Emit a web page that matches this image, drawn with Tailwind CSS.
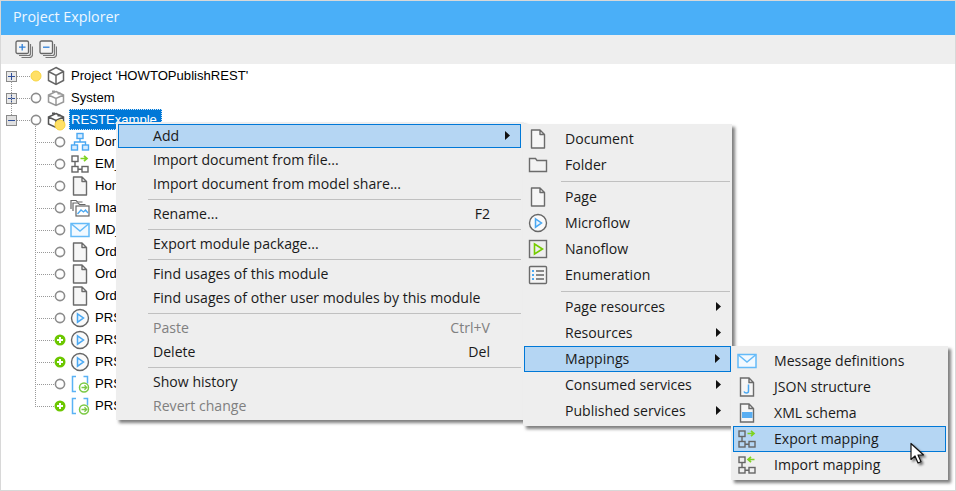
<!DOCTYPE html>
<html lang="en">
<head>
    <meta charset="UTF-8">
    <title>Project Explorer</title>
    <script src="https://cdn.jsdelivr.net/npm/@tailwindcss/browser@4"></script>
</head>
<body class="w-[956px] h-[491px] overflow-hidden bg-white">
    <svg class="hidden">
        <symbol id="plus" viewBox="0 0 11 11"><rect x=".5" y=".5" width="10" height="10" fill="#e8e8e8" stroke="#8a8a8a"/><path d="M2 5.5h7M5.5 2v7" stroke="#2f4f9a"/></symbol>
        <symbol id="minus" viewBox="0 0 11 11"><rect x=".5" y=".5" width="10" height="10" fill="#e0e0e0" stroke="#8a8a8a"/><path d="M2 5.5h7" stroke="#2f4f9a"/></symbol>
        <symbol id="off" viewBox="0 0 12 12"><circle cx="6" cy="6" r="4.6" fill="#fff" stroke="#8c8c8c" stroke-width="1.6"/></symbol>
        <symbol id="on" viewBox="0 0 12 12"><circle cx="6" cy="6" r="5" fill="#ffe066" stroke="#f8d540"/></symbol>
        <symbol id="add" viewBox="0 0 12 12"><circle cx="6" cy="6" r="5.5" fill="#6cc700"/><path d="M3 6h6M6 3v6" stroke="#fff" stroke-width="2"/></symbol>
        <symbol id="cube" viewBox="0 0 20 20"><path d="M10 1.5l7.5 4v9l-7.5 4-7.5-4v-9zM2.5 5.5l7.5 4 7.5-4M10 9.500v9" fill="none" stroke="#666" stroke-width="1.500"/></symbol>
        <symbol id="module" viewBox="0 0 20 20"><path d="M10 3.500l7.500 3.500v7l-7.500 3.500-7.500-3.500v-7zM2.500 7l7.500 3.500 7.500-3.500M10 10.500v7" fill="none" stroke="currentColor" stroke-width="1.500"/><rect x="6" y="2.500" width="3" height="2" fill="currentColor"/><rect x="11.500" y="4.500" width="3" height="2" fill="currentColor"/></symbol>
        <symbol id="domain" viewBox="0 0 20 20"><g fill="#d6ecff" stroke="#4aa8f2" stroke-width="1.400"><rect x="7" y="1.500" width="6" height="5"/><rect x="1.500" y="13" width="6" height="5"/><rect x="12.500" y="13" width="6" height="5"/></g><path d="M10 6.500v3.500M4.500 13v-3h11v3" fill="none" stroke="#4aa8f2" stroke-width="1.400"/></symbol>
        <symbol id="export" viewBox="0 0 20 20"><g fill="none" stroke="#666" stroke-width="1.400"><rect x="2" y="2" width="6" height="5.500"/><rect x="2" y="12.500" width="6" height="5.500"/><rect x="12" y="12.500" width="6" height="5.500"/><path d="M5 7.500v5M8 15.200h4"/></g><path d="M10.500 4.500h6M14 1.800l3 2.700-3 2.700" fill="none" stroke="#7ed321" stroke-width="1.700"/></symbol>
        <symbol id="import" viewBox="0 0 20 20"><g fill="none" stroke="#666" stroke-width="1.400"><rect x="2" y="2" width="6" height="5.500"/><rect x="2" y="12.500" width="6" height="5.500"/><rect x="12" y="12.500" width="6" height="5.500"/><path d="M5 7.500v5M8 15.200h4"/></g><path d="M17.500 4.500h-6.500M14 1.800l-3 2.700 3 2.700" fill="none" stroke="#7ed321" stroke-width="1.700"/></symbol>
        <symbol id="doc" viewBox="0 0 20 20"><path d="M3.500 1h8.500l4.500 4.500v13.500h-13zM12 1v4.500h4.500" fill="#f6f6f6" stroke="#6b6b6b" stroke-width="1.400" stroke-linejoin="round"/></symbol>
        <symbol id="images" viewBox="0 0 20 20"><path d="M1 11V2.500h5l1.500 1.500h5" fill="none" stroke="#666" stroke-width="1.200"/><path d="M3 13V5h5l1.500 1.500h6" fill="none" stroke="#666" stroke-width="1.200"/><rect x="6" y="8" width="13" height="10" fill="#fff" stroke="#666" stroke-width="1.200"/><path d="M7.500 16l3.500-4 2.500 2 2-2 2.500 3" fill="none" stroke="#4aa8f2" stroke-width="1.300"/></symbol>
        <symbol id="mail" viewBox="0 0 20 20"><rect x="1" y="3.500" width="18" height="13" fill="#f2f9ff" stroke="#64baf8" stroke-width="1.500"/><path d="M1.500 4l8.500 7 8.500-7" fill="none" stroke="#64baf8" stroke-width="1.500"/></symbol>
        <symbol id="flow" viewBox="0 0 20 20"><circle cx="10" cy="10" r="8.500" fill="#fafafa" stroke="#666" stroke-width="1.400"/><path d="M7.500 5.800l6 4.200-6 4.200z" fill="#e8f4ff" stroke="#4aa8f2" stroke-width="1.500"/></symbol>
        <symbol id="rest" viewBox="0 0 20 20"><path d="M6 2.500H2.500v15H6M13.500 2.500h4v7" fill="none" stroke="#5ab2f5" stroke-width="1.500"/><circle cx="14" cy="13.500" r="4.500" fill="#fff" stroke="#7ac943" stroke-width="1.500"/><path d="M11.500 13.500h5M14.500 11.300l2.200 2.200-2.200 2.200" fill="none" stroke="#7ac943" stroke-width="1.300"/></symbol>
        <symbol id="folder" viewBox="0 0 20 20"><path d="M1.500 16.500v-13h6l1.500 2h9.500v11z" fill="#f2f2f2" stroke="#6b6b6b" stroke-width="1.400"/></symbol>
        <symbol id="nano" viewBox="0 0 20 20"><rect x="1.500" y="1.500" width="17" height="17" fill="#eee" stroke="#6b6b6b" stroke-width="1.400"/><path d="M6.500 5l8 5-8 5z" fill="none" stroke="#76cc00" stroke-width="1.600"/></symbol>
        <symbol id="enum" viewBox="0 0 20 20"><rect x="1.500" y="1.500" width="17" height="17" rx="1" fill="#f4f4f4" stroke="#6b6b6b" stroke-width="1.400"/><path d="M8 6h8M8 10h8M8 14h8" stroke="#666" stroke-width="1.300"/><path d="M4 6h2M4 10h2M4 14h2" stroke="#4aa8f2" stroke-width="2"/></symbol>
        <symbol id="json" viewBox="0 0 20 20"><path d="M3.500 1h8.500l4.500 4.500v13.500h-13zM12 1v4.500h4.500" fill="#f6f6f6" stroke="#6b6b6b" stroke-width="1.400"/><path d="M11.500 7.500v6.500q0 2-2 2t-2.500-1.500" fill="none" stroke="#4aa8f2" stroke-width="1.500"/></symbol>
        <symbol id="xml" viewBox="0 0 20 20"><path d="M3.500 1h8.500l4.500 4.500v13.500h-13zM12 1v4.500h4.500" fill="#f6f6f6" stroke="#6b6b6b" stroke-width="1.400"/><rect x="5" y="9" width="10.500" height="6" fill="#59aef2"/></symbol>
        <symbol id="arrow" viewBox="0 0 5 9"><path d="M0 0l5 4.500-5 4.500z" fill="#111"/></symbol>
    </svg>

    <div class="relative w-[956px] h-[491px] border border-[#d8d8d8] font-['Open_Sans',sans-serif] text-[#1a1a1a]">
        <!-- title bar -->
        <div class="h-[34px] bg-[#4aaff8] flex items-center pl-3 pb-[2px] text-[14.300px] text-[#eef7ff]">Project Explorer</div>

        <!-- toolbar -->
        <div class="h-[29px] bg-[#eeeeee] flex items-center gap-[6px] pl-[14px] pb-[2px]">
            <svg class="w-[18px] h-[18px]" viewBox="0 0 18 18"><path d="M4 15.500h9.500q2 0 2-2V4M6.500 17.500h8q3 0 3-3V6.500" fill="none" stroke="#777" stroke-width="1.200"/><rect x="1" y="1" width="12.500" height="12.500" rx="1.500" fill="#f4f4f4" stroke="#666" stroke-width="1.300"/><path d="M4 7.200h6.500M7.200 4v6.500" stroke="#2f7fd6" stroke-width="1.300"/></svg>
            <svg class="w-[18px] h-[18px]" viewBox="0 0 18 18"><path d="M4 15.500h9.500q2 0 2-2V4M6.500 17.500h8q3 0 3-3V6.500" fill="none" stroke="#777" stroke-width="1.200"/><rect x="1" y="1" width="12.500" height="12.500" rx="1.500" fill="#f4f4f4" stroke="#666" stroke-width="1.300"/><path d="M4 7.200h6.500" stroke="#2f7fd6" stroke-width="1.300"/></svg>
        </div>

        <!-- tree -->
        <div class="relative pt-px font-['Liberation_Sans',sans-serif] text-[13.100px] text-black">
            <div class="absolute left-[10px] top-[17px] h-[44px] border-l border-dotted border-[#999]"></div>
            <div class="absolute left-[34px] top-[54px] h-[287px] border-l border-dotted border-[#999]"></div>

            <div class="flex items-center h-[22px] pl-[5px]"><svg class="w-[11px] h-[11px]"><use href="#plus"/></svg><span class="w-[13px] border-t border-dotted border-[#999]"></span><svg class="w-3 h-3"><use href="#on"/></svg><svg class="w-5 h-5 ml-[4px]"><use href="#cube"/></svg><span class="ml-[5px]">Project 'HOWTOPublishREST'</span></div>
            <div class="flex items-center h-[22px] pl-[5px]"><svg class="w-[11px] h-[11px]"><use href="#plus"/></svg><span class="w-[13px] border-t border-dotted border-[#999]"></span><svg class="w-3 h-3"><use href="#off"/></svg><svg class="w-5 h-5 ml-[4px] text-[#999]"><use href="#module"/></svg><span class="ml-[5px]">System</span></div>
            <div class="relative flex items-center h-[22px] pl-[5px]"><svg class="w-[11px] h-[11px]"><use href="#minus"/></svg><span class="w-[13px] border-t border-dotted border-[#999]"></span><svg class="w-3 h-3"><use href="#off"/></svg><svg class="w-5 h-5 ml-[4px] text-[#555]"><use href="#module"/></svg><svg class="absolute left-[53px] top-[10px] w-3 h-3"><use href="#on"/></svg><span class="ml-[3px] px-px h-[21px] leading-[19px] w-[93px] bg-[#0078d7] text-white border border-dotted border-[#cfe6fa] -mt-px">RESTExample</span></div>

            <div class="flex items-center h-[22px] pl-[34px]"><span class="w-[19px] border-t border-dotted border-[#999]"></span><svg class="w-3 h-3"><use href="#off"/></svg><svg class="w-5 h-5 ml-[4px]"><use href="#domain"/></svg><span class="ml-[5px]">Dom</span></div>
            <div class="flex items-center h-[22px] pl-[34px]"><span class="w-[19px] border-t border-dotted border-[#999]"></span><svg class="w-3 h-3"><use href="#off"/></svg><svg class="w-5 h-5 ml-[4px]"><use href="#export"/></svg><span class="ml-[5px]">EM_</span></div>
            <div class="flex items-center h-[22px] pl-[34px]"><span class="w-[19px] border-t border-dotted border-[#999]"></span><svg class="w-3 h-3"><use href="#off"/></svg><svg class="w-5 h-5 ml-[4px]"><use href="#doc"/></svg><span class="ml-[5px]">Hom</span></div>
            <div class="flex items-center h-[22px] pl-[34px]"><span class="w-[19px] border-t border-dotted border-[#999]"></span><svg class="w-3 h-3"><use href="#off"/></svg><svg class="w-5 h-5 ml-[4px]"><use href="#images"/></svg><span class="ml-[5px]">Ima</span></div>
            <div class="flex items-center h-[22px] pl-[34px]"><span class="w-[19px] border-t border-dotted border-[#999]"></span><svg class="w-3 h-3"><use href="#off"/></svg><svg class="w-5 h-5 ml-[4px]"><use href="#mail"/></svg><span class="ml-[5px]">MD_</span></div>
            <div class="flex items-center h-[22px] pl-[34px]"><span class="w-[19px] border-t border-dotted border-[#999]"></span><svg class="w-3 h-3"><use href="#off"/></svg><svg class="w-5 h-5 ml-[4px]"><use href="#doc"/></svg><span class="ml-[5px]">Ord</span></div>
            <div class="flex items-center h-[22px] pl-[34px]"><span class="w-[19px] border-t border-dotted border-[#999]"></span><svg class="w-3 h-3"><use href="#off"/></svg><svg class="w-5 h-5 ml-[4px]"><use href="#doc"/></svg><span class="ml-[5px]">Ord</span></div>
            <div class="flex items-center h-[22px] pl-[34px]"><span class="w-[19px] border-t border-dotted border-[#999]"></span><svg class="w-3 h-3"><use href="#off"/></svg><svg class="w-5 h-5 ml-[4px]"><use href="#doc"/></svg><span class="ml-[5px]">Ord</span></div>
            <div class="flex items-center h-[22px] pl-[34px]"><span class="w-[19px] border-t border-dotted border-[#999]"></span><svg class="w-3 h-3"><use href="#off"/></svg><svg class="w-5 h-5 ml-[4px]"><use href="#flow"/></svg><span class="ml-[5px]">PRS</span></div>
            <div class="flex items-center h-[22px] pl-[34px]"><span class="w-[19px] border-t border-dotted border-[#999]"></span><svg class="w-3 h-3"><use href="#add"/></svg><svg class="w-5 h-5 ml-[4px]"><use href="#flow"/></svg><span class="ml-[5px]">PRS</span></div>
            <div class="flex items-center h-[22px] pl-[34px]"><span class="w-[19px] border-t border-dotted border-[#999]"></span><svg class="w-3 h-3"><use href="#add"/></svg><svg class="w-5 h-5 ml-[4px]"><use href="#flow"/></svg><span class="ml-[5px]">PRS</span></div>
            <div class="flex items-center h-[22px] pl-[34px]"><span class="w-[19px] border-t border-dotted border-[#999]"></span><svg class="w-3 h-3"><use href="#off"/></svg><svg class="w-5 h-5 ml-[4px]"><use href="#rest"/></svg><span class="ml-[5px]">PRS</span></div>
            <div class="flex items-center h-[22px] pl-[34px]"><span class="w-[19px] border-t border-dotted border-[#999]"></span><svg class="w-3 h-3"><use href="#add"/></svg><svg class="w-5 h-5 ml-[4px]"><use href="#rest"/></svg><span class="ml-[5px]">PRS</span></div>
        </div>

        <!-- context menu -->
        <div class="absolute left-[115px] top-[121px] w-[408px] p-[2px] pr-0 bg-[#eeeeee] shadow-[3px_3px_3px_rgba(0,0,0,0.5)] text-[14.080px]">
            <div class="flex items-center justify-between h-[24px] w-[403px] pl-[34px] pr-[10px] pb-px bg-[#b5d6f3] border border-[#0078d7]"><span>Add</span><svg class="w-[5px] h-[9px]"><use href="#arrow"/></svg></div>
            <div class="flex items-center h-[24px] pl-[35px] pb-px">Import document from file...</div>
            <div class="flex items-center h-[24px] pl-[35px] pb-px">Import document from model share...</div>
            <div class="h-px bg-[#c0c0c0] my-[2.500px] ml-[30px] mr-[3px]"></div>
            <div class="flex items-center justify-between h-[24px] pl-[35px] pr-[34px] pb-px"><span>Rename...</span><span>F2</span></div>
            <div class="h-px bg-[#c0c0c0] my-[2.500px] ml-[30px] mr-[3px]"></div>
            <div class="flex items-center h-[24px] pl-[35px] pb-px">Export module package...</div>
            <div class="h-px bg-[#c0c0c0] my-[2.500px] ml-[30px] mr-[3px]"></div>
            <div class="flex items-center h-[24px] pl-[35px] pb-px">Find usages of this module</div>
            <div class="flex items-center h-[24px] pl-[35px] pb-px">Find usages of other user modules by this module</div>
            <div class="h-px bg-[#c0c0c0] my-[2.500px] ml-[30px] mr-[3px]"></div>
            <div class="flex items-center justify-between h-[24px] pl-[35px] pr-[34px] pb-px text-[#808080]"><span>Paste</span><span>Ctrl+V</span></div>
            <div class="flex items-center justify-between h-[24px] pl-[35px] pr-[34px] pb-px"><span>Delete</span><span>Del</span></div>
            <div class="h-px bg-[#c0c0c0] my-[2.500px] ml-[30px] mr-[3px]"></div>
            <div class="flex items-center h-[24px] pl-[35px] pb-px">Show history</div>
            <div class="flex items-center h-[24px] pl-[35px] pb-px text-[#808080]">Revert change</div>
        </div>

        <!-- add submenu -->
        <div class="absolute left-[522px] top-[123px] w-[209px] py-[2px] pl-px bg-[#eeeeee] shadow-[3px_3px_3px_rgba(0,0,0,0.5)] text-[14.080px]">
            <div class="flex items-center h-[26px] pb-px"><svg class="w-5 h-5 ml-[4px]"><use href="#doc"/></svg><span class="ml-[17px]">Document</span></div>
            <div class="flex items-center h-[26px] pb-px"><svg class="w-5 h-5 ml-[4px]"><use href="#folder"/></svg><span class="ml-[17px]">Folder</span></div>
            <div class="h-px bg-[#c0c0c0] my-[2.500px] ml-[37px] mr-[2px]"></div>
            <div class="flex items-center h-[26px] pb-px"><svg class="w-5 h-5 ml-[4px]"><use href="#doc"/></svg><span class="ml-[17px]">Page</span></div>
            <div class="flex items-center h-[26px] pb-px"><svg class="w-5 h-5 ml-[4px]"><use href="#flow"/></svg><span class="ml-[17px]">Microflow</span></div>
            <div class="flex items-center h-[26px] pb-px"><svg class="w-5 h-5 ml-[4px]"><use href="#nano"/></svg><span class="ml-[17px]">Nanoflow</span></div>
            <div class="flex items-center h-[26px] pb-px"><svg class="w-5 h-5 ml-[4px]"><use href="#enum"/></svg><span class="ml-[17px]">Enumeration</span></div>
            <div class="h-px bg-[#c0c0c0] my-[2.500px] ml-[37px] mr-[2px]"></div>
            <div class="flex items-center justify-between h-[26px] pl-[41px] pr-[11px] pb-px"><span>Page resources</span><svg class="w-[5px] h-[9px]"><use href="#arrow"/></svg></div>
            <div class="flex items-center justify-between h-[26px] pl-[41px] pr-[11px] pb-px"><span>Resources</span><svg class="w-[5px] h-[9px]"><use href="#arrow"/></svg></div>
            <div class="flex items-center justify-between h-[26px] w-[207px] pl-[40px] pr-[10px] pb-px bg-[#b5d6f3] border border-[#0078d7]"><span>Mappings</span><svg class="w-[5px] h-[9px]"><use href="#arrow"/></svg></div>
            <div class="flex items-center justify-between h-[26px] pl-[41px] pr-[11px] pb-px"><span>Consumed services</span><svg class="w-[5px] h-[9px]"><use href="#arrow"/></svg></div>
            <div class="flex items-center justify-between h-[26px] pl-[41px] pr-[11px] pb-px"><span>Published services</span><svg class="w-[5px] h-[9px]"><use href="#arrow"/></svg></div>
        </div>

        <!-- mappings submenu -->
        <div class="absolute left-[730px] top-[345px] w-[217px] p-[2px] bg-[#eeeeee] shadow-[3px_3px_3px_rgba(0,0,0,0.5)] text-[14.080px]">
            <div class="flex items-center h-[26px] pb-px"><svg class="w-5 h-5 ml-[4px]"><use href="#mail"/></svg><span class="ml-[17px]">Message definitions</span></div>
            <div class="flex items-center h-[26px] pb-px"><svg class="w-5 h-5 ml-[4px]"><use href="#json"/></svg><span class="ml-[17px]">JSON structure</span></div>
            <div class="flex items-center h-[26px] pb-px"><svg class="w-5 h-5 ml-[4px]"><use href="#xml"/></svg><span class="ml-[17px]">XML schema</span></div>
            <div class="flex items-center h-[26px] pb-px bg-[#b5d6f3] border border-[#0078d7]"><svg class="w-5 h-5 ml-[3px]"><use href="#export"/></svg><span class="ml-[17px]">Export mapping</span></div>
            <div class="flex items-center h-[26px] pb-px"><svg class="w-5 h-5 ml-[4px]"><use href="#import"/></svg><span class="ml-[17px]">Import mapping</span></div>
        </div>

        <!-- mouse pointer -->
        <svg class="absolute left-[908px] top-[441px] w-[18px] h-[24px] drop-shadow-[2px_2px_1px_rgba(0,0,0,0.5)]" viewBox="0 0 18 24"><path d="M2 1.500v16l4-3.500 3 7 3-1.300-3-6.700h5.500z" fill="#fff" stroke="#111" stroke-width="1.200" stroke-linejoin="round"/></svg>
    </div>
</body>
</html>
